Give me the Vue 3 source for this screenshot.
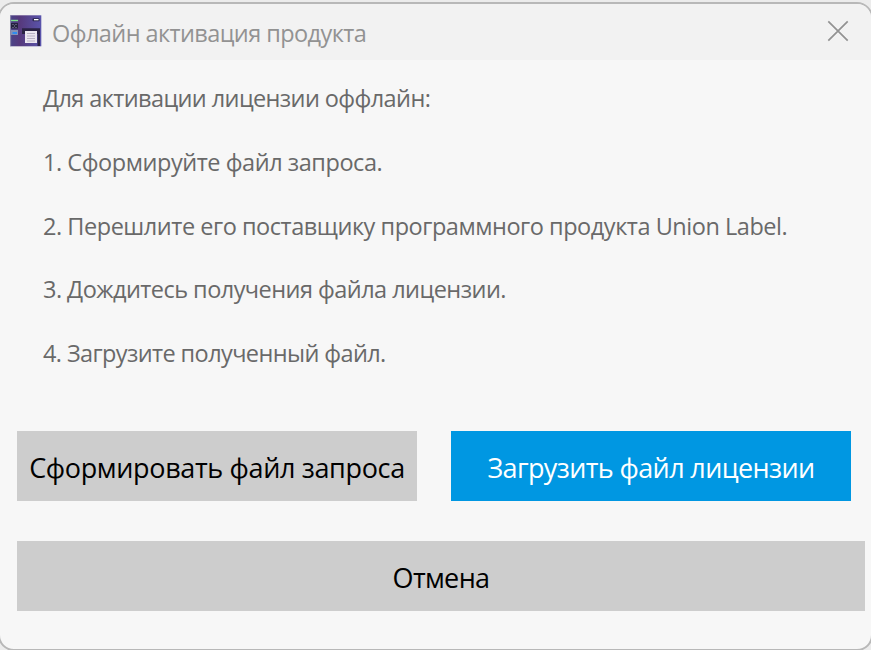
<template>
  <div class="desktop">
    <div class="dialog">
      <header class="title-bar">
        <svg class="app-icon" width="32" height="32" viewBox="0 0 32 32">
          <defs>
            <linearGradient id="body-fill" x1="0" y1="0" x2="1" y2="0">
              <stop offset="0" stop-color="#4a4488" />
              <stop offset="0.3" stop-color="#56397c" />
              <stop offset="0.6" stop-color="#574590" />
              <stop offset="1" stop-color="#5a54ac" />
            </linearGradient>
          </defs>
          <rect width="31" height="31" x="0.3" y="0.3" fill="url(#body-fill)" />
          <rect x="0.3" y="0.3" width="0.8" height="31" fill="#8f8aa8" />
          <rect x="1" y="4.8" width="7" height="1.4" fill="#7fe08a" />
          <rect x="1" y="8" width="7" height="5.5" fill="#26223f" />
          <path d="M2.5 9.5h1M5.5 9.5h1M4 11h1M2.5 12.5h1M5.5 12.5h1" stroke="#8c8ca8" stroke-width="1" />
          <rect x="1" y="15" width="7" height="5" fill="#8490b4" />
          <rect x="2.5" y="17" width="4.5" height="2" fill="#2f8cf0" />
          <rect x="22.5" y="3.2" width="7" height="3" rx="0.8" fill="#2c2850" />
          <rect x="24" y="4" width="4.5" height="1.3" fill="#fff" />
          <path d="M12 13.2H30V31H27.5V19H12z" fill="#2b2345" />
          <rect x="15" y="16" width="12" height="12" fill="#ebe6ef" />
          <path d="M17 18.5h8M17 21h8M17 23.5h8M17 26h8" stroke="#b9b2c4" stroke-width="1" />
        </svg>
        <h1 class="title">Офлайн активация продукта</h1>
        <button class="close" aria-label="Закрыть">
          <svg width="22" height="22" viewBox="0 0 22 22">
            <path d="M1.3 1.3L20.7 20.7M20.7 1.3L1.3 20.7" stroke="#929292" stroke-width="1.7" />
          </svg>
        </button>
      </header>

      <main class="content">
        <div class="steps">
          <p v-for="line in lines" :key="line.text">
            <span :style="{ letterSpacing: line.spacing + 'px' }">{{ line.text }}</span>
          </p>
        </div>

        <div class="actions">
          <button class="btn request">Сформировать файл запроса</button>
          <button class="btn primary">Загрузить файл лицензии</button>
        </div>
        <button class="btn cancel">Отмена</button>
      </main>
    </div>
  </div>
</template>

<script setup>
const lines = [
  { text: 'Для активации лицензии оффлайн:', spacing: -0.6 },
  { text: '1. Сформируйте файл запроса.', spacing: -0.45 },
  { text: '2. Перешлите его поставщику программного продукта Union Label.', spacing: -0.46 },
  { text: '3. Дождитесь получения файла лицензии.', spacing: -0.54 },
  { text: '4. Загрузите полученный файл.', spacing: -0.6 }
]
</script>

<style>
body {
  background: #f0f0f0;
}
</style>

<style scoped>
.desktop {
  width: 871px;
  height: 650px;
  padding-top: 2px;
  box-sizing: border-box;
  overflow: hidden;
  background: #ececec;
  font-family: "Open Sans", "Noto Sans", sans-serif;
}

.dialog {
  width: 875px;
  height: 649px;
  margin-left: -2px;
  box-sizing: border-box;
  border: 2px solid #b8b8b8;
  border-radius: 16px;
  overflow: hidden;
  background: #f7f7f7;
}

.title-bar {
  display: flex;
  align-items: center;
  height: 56px;
  padding: 0 22px 2px 10px;
  box-sizing: border-box;
  background: #f2f2f2;
}

.app-icon {
  flex: none;
}

.title {
  flex: 1;
  margin: 3px 0 0 10px;
  font-size: 23.5px;
  font-weight: 400;
  line-height: 34px;
  letter-spacing: -0.58px;
  color: #929292;
  white-space: nowrap;
}

.close {
  display: flex;
  padding: 0;
  border: none;
  background: none;
}

.steps {
  padding: 6px 0 0 43px;
}

.steps p {
  height: 63.8px;
  margin: 0;
  font-size: 23.5px;
  line-height: 64px;
  color: #696969;
  white-space: nowrap;
}

.actions {
  display: flex;
  gap: 34px;
  padding: 46px 0 0 17px;
}

.btn {
  display: flex;
  align-items: center;
  justify-content: center;
  width: 400px;
  height: 70px;
  padding: 4px 0 0;
  border: none;
  background: #cdcdcd;
  color: #000;
  font-family: inherit;
  font-size: 27px;
  letter-spacing: -0.35px;
  white-space: nowrap;
}

.btn.primary {
  background: #0097e2;
  color: #fff;
  letter-spacing: -0.62px;
}

.btn.cancel {
  width: 848px;
  margin: 40px 0 0 17px;
  letter-spacing: -0.65px;
}
</style>
